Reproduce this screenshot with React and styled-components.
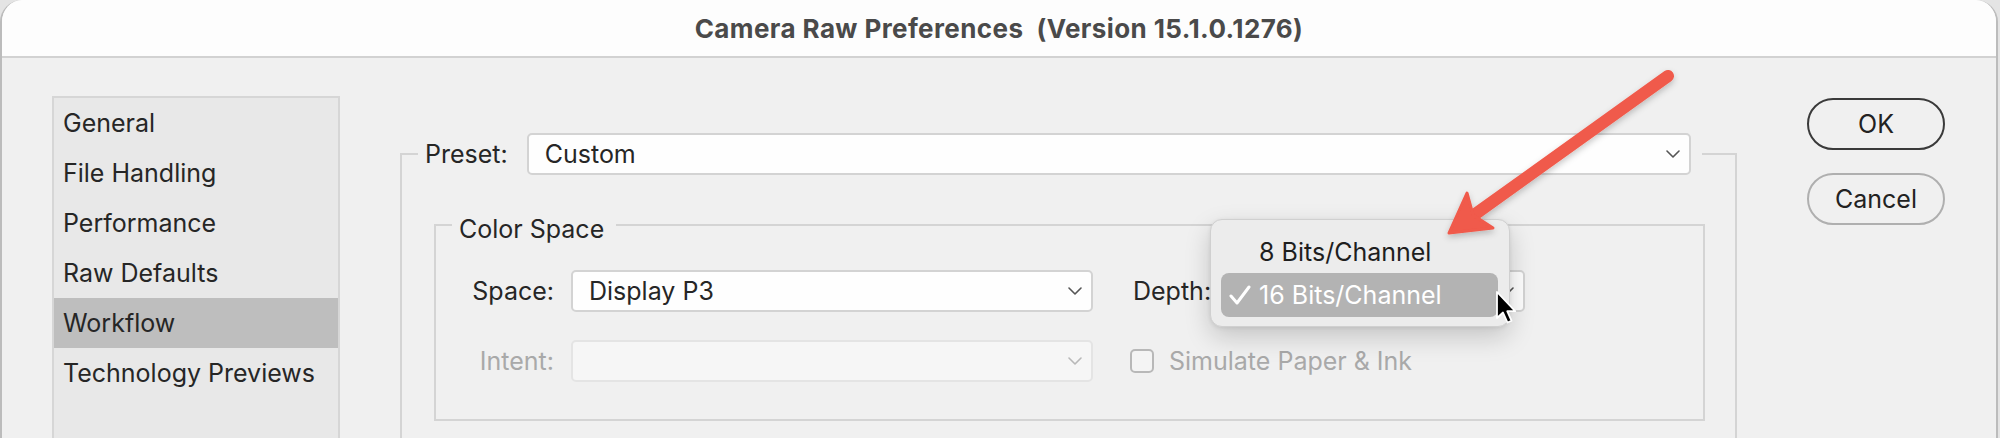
import React from 'react';
import styled, { createGlobalStyle } from 'styled-components';

const GlobalStyle = createGlobalStyle`
	html, body {
		margin: 0;
		padding: 0;
		background: #e4e4e4;
	}
	body {
		font-family: Inter, "Liberation Sans", sans-serif;
		color: #262626;
	}
	#root {
		width: 2000px;
		height: 438px;
		overflow: hidden;
	}
`;

const Window = styled.div`
	position: relative;
	width: 1998px;
	height: 438px;
	box-sizing: border-box;
	background: #f0f0f0;
	border-left: 2px solid #bcbcbc;
	border-right: 2px solid #bcbcbc;
	border-radius: 22px 22px 0 0;
	overflow: hidden;
`;

const TitleBar = styled.div`
	height: 56px;
	background: #fdfdfd;
	border-bottom: 2px solid #d2d2d2;
	display: flex;
	align-items: center;
	justify-content: center;
	font-size: 26px;
	letter-spacing: 0.4px;
	font-weight: 700;
	color: #4a4a4a;
	white-space: pre;
`;

const Body = styled.div`
	display: flex;
	align-items: flex-start;
	padding: 38px 0 0 50px;
`;

const Sidebar = styled.div`
	width: 288px;
	height: 400px;
	box-sizing: border-box;
	background: #e8e8e8;
	border: 2px solid #d6d6d6;
	flex-shrink: 0;
`;

const NavItem = styled.div`
	height: 50px;
	display: flex;
	align-items: center;
	padding-left: 9px;
	font-size: 25px;
	background: ${(p) => (p.$active ? '#bebebe' : 'transparent')};
`;

const Main = styled.fieldset`
	margin: 37px 0 0 60px;
	width: 1337px;
	box-sizing: border-box;
	border: 2px solid #d4d4d4;
	border-bottom: none;
	padding: 0 30px 40px 16px;
	min-width: 0;
	flex-shrink: 0;
`;

const PresetLegend = styled.legend`
	display: flex;
	align-items: center;
	gap: 19px;
	padding: 0 11px 0 7px;
	font-size: 25px;
`;

const Select = styled.div`
	position: relative;
	width: ${(p) => p.$width}px;
	height: 42px;
	box-sizing: border-box;
	display: flex;
	align-items: center;
	justify-content: space-between;
	padding: 0 9px 0 16px;
	background: ${(p) => (p.$disabled ? '#f6f6f6' : '#fefefe')};
	border: 2px solid ${(p) => (p.$disabled ? '#e4e4e4' : '#d3d3d3')};
	border-radius: 5px;
	font-size: 25px;
	flex-shrink: 0;

	svg {
		stroke: ${(p) => (p.$disabled ? '#b8b8b8' : '#555')};
	}
`;

const GroupBox = styled.fieldset`
	margin: 33px 0 0 16px;
	border: 2px solid #d4d4d4;
	padding: 0 16px 37px;
	min-width: 0;
`;

const GroupLegend = styled.legend`
	padding: 9px 12px 0 7px;
	font-size: 25px;
	line-height: 1;
`;

const Row = styled.div`
	display: flex;
	align-items: center;
	margin-top: 28px;
`;

const Label = styled.div`
	width: 102px;
	margin-right: 17px;
	text-align: right;
	font-size: 25px;
	color: ${(p) => (p.$disabled ? '#a9a9a9' : '#262626')};
	flex-shrink: 0;
`;

const DepthField = styled.div`
	display: flex;
	align-items: center;
	gap: 17px;
	margin-left: 40px;
	font-size: 25px;
`;

const CheckField = styled.label`
	display: flex;
	align-items: center;
	gap: 15px;
	margin-left: 37px;
	font-size: 25px;
	color: #a9a9a9;
`;

const CheckBox = styled.span`
	width: 24px;
	height: 24px;
	box-sizing: border-box;
	border: 2px solid #b8b8b8;
	border-radius: 5px;
	background: #f4f4f4;
`;

const Menu = styled.div`
	position: absolute;
	left: -20px;
	top: -53px;
	width: 300px;
	height: 108px;
	box-sizing: border-box;
	padding: 10px 11px 10px 10px;
	background: #ececec;
	border: 1px solid #d0d0d0;
	border-radius: 12px;
	box-shadow: 0 10px 26px rgba(0, 0, 0, 0.18), 0 1px 4px rgba(0, 0, 0, 0.08);
	z-index: 2;
`;

const MenuItem = styled.div`
	height: ${(p) => (p.$selected ? 44 : 43)}px;
	display: grid;
	grid-template-columns: 38px 1fr;
	align-items: center;
	border-radius: 8px;
	font-size: 25px;
	color: ${(p) => (p.$selected ? '#ffffff' : '#1e1e1e')};
	background: ${(p) => (p.$selected ? '#b3b3b3' : 'transparent')};
`;

const Check = styled.span`
	display: flex;
	align-items: center;
	padding-left: 8px;

	svg {
		stroke: #ffffff;
	}
`;

const Buttons = styled.div`
	display: flex;
	flex-direction: column;
	gap: 23px;
	margin: 2px 0 0 70px;
`;

const Button = styled.button`
	width: 138px;
	height: 52px;
	box-sizing: border-box;
	border-radius: 26px;
	border: 2px solid ${(p) => (p.$primary ? '#3a3a3a' : '#afafaf')};
	background: transparent;
	font-family: inherit;
	font-size: 25px;
	color: #222;
	padding: 0;
`;

const Overlay = styled.svg`
	position: absolute;
	left: -2px;
	top: 0;
	pointer-events: none;
	z-index: 5;
`;

function Chevron() {
	return (
		<svg width="14" height="8" viewBox="0 0 14 8" fill="none" strokeWidth="1.6" strokeLinecap="round" strokeLinejoin="round">
			<polyline points="1,1 7,7 13,1" />
		</svg>
	);
}

function CheckMark() {
	return (
		<svg width="22" height="20" viewBox="0 0 22 20" fill="none" strokeWidth="3" strokeLinecap="round" strokeLinejoin="round">
			<polyline points="2,11 8,18 20,2" />
		</svg>
	);
}

const navItems = ['General', 'File Handling', 'Performance', 'Raw Defaults', 'Workflow', 'Technology Previews'];

export default function App() {
	return (
		<>
			<GlobalStyle />
			<Window>
				<TitleBar>{'Camera Raw Preferences  (Version 15.1.0.1276)'}</TitleBar>
				<Body>
					<Sidebar>
						{navItems.map((item) => (
							<NavItem key={item} $active={item === 'Workflow'}>{item}</NavItem>
						))}
					</Sidebar>

					<Main>
						<PresetLegend>
							<span>Preset:</span>
							<Select $width={1164}>
								<span>Custom</span>
								<Chevron />
							</Select>
						</PresetLegend>

						<GroupBox>
							<GroupLegend>Color Space</GroupLegend>
							<Row>
								<Label>Space:</Label>
								<Select $width={522}>
									<span>Display P3</span>
									<Chevron />
								</Select>
								<DepthField>
									<span>Depth:</span>
									<Select $width={297}>
										<span />
										<Chevron />
										<Menu>
											<MenuItem>
												<span />
												<span>8 Bits/Channel</span>
											</MenuItem>
											<MenuItem $selected>
												<Check><CheckMark /></Check>
												<span>16 Bits/Channel</span>
											</MenuItem>
										</Menu>
									</Select>
								</DepthField>
							</Row>
							<Row>
								<Label $disabled>Intent:</Label>
								<Select $width={522} $disabled>
									<span />
									<Chevron />
								</Select>
								<CheckField>
									<CheckBox />
									<span>Simulate Paper &amp; Ink</span>
								</CheckField>
							</Row>
						</GroupBox>
					</Main>

					<Buttons>
						<Button $primary>OK</Button>
						<Button>Cancel</Button>
					</Buttons>
				</Body>

				<Overlay width="2000" height="438" viewBox="0 0 2000 438">
					<defs>
						<filter id="arrowShadow" x="-20%" y="-20%" width="140%" height="140%">
							<feDropShadow dx="0" dy="3" stdDeviation="3" floodColor="#000" floodOpacity="0.22" />
						</filter>
					</defs>
					<g filter="url(#arrowShadow)" fill="#f05a4b" stroke="#f05a4b">
						<line x1="1668" y1="76" x2="1474" y2="215" strokeWidth="12" strokeLinecap="round" />
						<path d="M1449 233 L1467 193 L1473 215 L1493 228 Z" strokeWidth="3" strokeLinejoin="round" />
					</g>
					<path
						d="M1497 292 l0 26 l6 -5.5 l4.5 10 l4 -1.8 l-4.3 -9.5 l8 0 z"
						fill="#000"
						stroke="#fff"
						strokeWidth="1.8"
						strokeLinejoin="round"
					/>
				</Overlay>
			</Window>
		</>
	);
}
